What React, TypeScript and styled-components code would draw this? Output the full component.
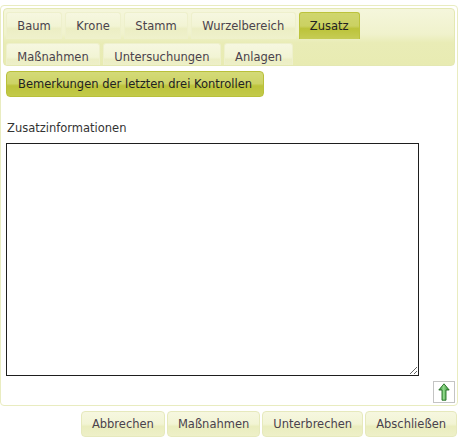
import React from "react";
import styled, { createGlobalStyle } from "styled-components";

const Global = createGlobalStyle`
  html, body { margin: 0; padding: 0; background: #fff; }
  body { font-family: "DejaVu Sans", Verdana, sans-serif; font-size: 11.5px; color: #444; }
  * { box-sizing: border-box; }
`;

const Panel = styled.div`
  margin-top: 5px;
  width: 458px;
  height: 401px;
  border: 1px solid #e9ecc0;
  border-radius: 4px;
  padding: 2px;
  display: flex;
  flex-direction: column;
`;

const TabBar = styled.div`
  display: flex;
  flex-wrap: wrap;
  row-gap: 2px;
  column-gap: 3px;
  padding: 3px 3px 0 2px;
  border: 1px solid #e4e8b2;
  border-radius: 4px;
  background: linear-gradient(#f5f6dc 0%, #f0f2cc 45%, #e9ecb6 60%, #e8ebb2 100%);
  height: 59px;
  overflow: hidden;
  align-content: flex-start;
`;

const Tab = styled.div<{ $active?: boolean }>`
  height: 27px;
  padding: 0 10.3px;
  display: flex;
  align-items: center;
  border: 1px solid ${(p) => (p.$active ? "#bcc33c" : "#eef0cc")};
  border-bottom: none;
  border-radius: 3px 3px 0 0;
  color: ${(p) => (p.$active ? "#222" : "#4a424c")};
  background: ${(p) =>
    p.$active
      ? "linear-gradient(#d0d66e 0%, #cbd162 50%, #bcc33a 60%, #c6cc55 100%)"
      : "linear-gradient(#f6f7e0 0%, #f2f4d4 50%, #eceec4 60%, #eff1cc 100%)"};
  white-space: nowrap;
`;

const RowBreak = styled.div`
  flex-basis: 100%;
  height: 0;
`;

const Content = styled.div`
  flex: 1;
  display: flex;
  flex-direction: column;
  padding: 5px 0 0 3px;
`;

const OliveButton = styled.button`
  align-self: flex-start;
  height: 26px;
  padding: 0 11px;
  font-family: inherit;
  font-size: 11.5px;
  color: #222;
  border: 1px solid #b9c03a;
  border-radius: 4px;
  background: linear-gradient(#d4da78 0%, #cdd366 48%, #bcc33a 58%, #c3ca4a 100%);
`;

const Label = styled.div`
  margin-top: 24px;
  padding-left: 1px;
  height: 14px;
  line-height: 14px;
  color: #333;
`;

const TextArea = styled.textarea`
  margin-top: 8px;
  width: 413px;
  height: 233px;
  border: 1px solid #1e1e1e;
  resize: both;
  font-family: inherit;
  font-size: 11.5px;
  padding: 2px;
  outline: none;
`;

const UpRow = styled.div`
  display: flex;
  justify-content: flex-end;
  margin-top: 5px;
`;

const UpButton = styled.button`
  width: 22px;
  height: 22px;
  padding: 0;
  border: 1px solid #c4c4c4;
  background: #fff;
  display: flex;
  align-items: center;
  justify-content: center;
`;

const Footer = styled.div`
  display: flex;
  justify-content: flex-end;
  gap: 2px;
  padding: 5px 1px 0 0;
  width: 458px;
`;

const FooterButton = styled.button`
  height: 26px;
  padding: 0 10px;
  font-family: inherit;
  font-size: 11.5px;
  color: #4a424c;
  border: 1px solid #e6e9bc;
  border-radius: 4px;
  background: linear-gradient(#f6f7e0 0%, #f2f4d4 50%, #eaedbe 60%, #eef0c8 100%);
`;

const ArrowIcon = () => (
  <svg width="12" height="18" viewBox="0 0 12 18">
    <defs>
      <linearGradient id="ag" x1="0" x2="1" y1="0" y2="0">
        <stop offset="0" stopColor="#2f8a2f" />
        <stop offset="0.45" stopColor="#8fd88a" />
        <stop offset="1" stopColor="#2f8a2f" />
      </linearGradient>
    </defs>
    <path
      d="M6 0.8 L11.2 7 L8 7 L8 17.2 L4 17.2 L4 7 L0.8 7 Z"
      fill="url(#ag)"
      stroke="#1f6b1f"
      strokeWidth="0.9"
      strokeLinejoin="round"
    />
  </svg>
);

const row1 = ["Baum", "Krone", "Stamm", "Wurzelbereich", "Zusatz"];
const row2 = ["Maßnahmen", "Untersuchungen", "Anlagen"];

export default function App() {
  return (
    <>
      <Global />
      <Panel>
        <TabBar>
          {row1.map((t) => (
            <Tab key={t} $active={t === "Zusatz"}>
              {t}
            </Tab>
          ))}
          <RowBreak />
          {row2.map((t) => (
            <Tab key={t}>{t}</Tab>
          ))}
        </TabBar>
        <Content>
          <OliveButton>Bemerkungen der letzten drei Kontrollen</OliveButton>
          <Label>Zusatzinformationen</Label>
          <TextArea />
          <UpRow>
            <UpButton>
              <ArrowIcon />
            </UpButton>
          </UpRow>
        </Content>
      </Panel>
      <Footer>
        <FooterButton>Abbrechen</FooterButton>
        <FooterButton>Maßnahmen</FooterButton>
        <FooterButton>Unterbrechen</FooterButton>
        <FooterButton>Abschließen</FooterButton>
      </Footer>
    </>
  );
}
